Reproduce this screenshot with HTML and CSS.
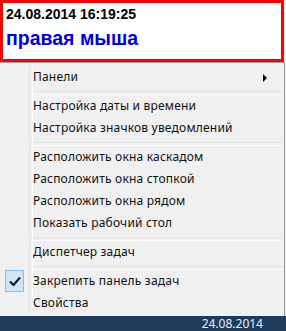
FILE: index.html
```html
<!DOCTYPE html>
<html lang="ru">
<head>
  <meta charset="UTF-8">
  <title>правая мыша</title>
  <link rel="stylesheet" href="styles.css">
</head>
<body>
  <div class="note">
    <div class="note-time">24.08.2014 16:19:25</div>
    <div class="note-title">правая мыша</div>
  </div>

  <div class="menu">
    <div class="item has-sub">Панели<span class="arrow"></span></div>
    <div class="sep"></div>
    <div class="item">Настройка даты и времени</div>
    <div class="item">Настройка значков уведомлений</div>
    <div class="sep"></div>
    <div class="item">Расположить окна каскадом</div>
    <div class="item">Расположить окна стопкой</div>
    <div class="item">Расположить окна рядом</div>
    <div class="item">Показать рабочий стол</div>
    <div class="sep"></div>
    <div class="item">Диспетчер задач</div>
    <div class="sep"></div>
    <div class="item checked">
      <span class="check">
        <svg width="12" height="10" viewBox="0 0 12 10"><path d="M1 5.5 L4.5 9 L11 1.5" fill="none" stroke="#1b1b1b" stroke-width="2.2"/></svg>
      </span>
      Закрепить панель задач
    </div>
    <div class="item">Свойства</div>
  </div>

  <div class="taskbar">
    <span class="clock">24.08.2014</span>
  </div>
</body>
</html>
```

FILE: styles.css
```css
* {
  margin: 0;
  padding: 0;
  box-sizing: border-box;
}

body {
  width: 286px;
  height: 331px;
  overflow: hidden;
  background-color: #f0f0f0;
  display: flex;
  flex-direction: column;
}

/* red note on top */
.note {
  width: 284px;
  height: 62px;
  flex-shrink: 0;
  border: 3px solid #f00;
  background-color: #fff;
  padding: 2px 3px;
  font-family: "Liberation Sans", Arial, sans-serif;
  font-weight: bold;
}

.note-time {
  font-size: 14px;
  line-height: 18px;
  color: #000;
}

.note-title {
  font-size: 19.5px;
  line-height: 30px;
  color: #0000dd;
}

/* context menu */
.menu {
  width: 285px;
  height: 254px;
  flex-shrink: 0;
  background-color: #f0f0f0;
  border-top: 1px solid #a0a0a0;
  border-right: 1px solid #979797;
  padding: 3px 2px 2px 0;
  font-family: "Noto Sans", "Open Sans", sans-serif;
  font-size: 12px;
  letter-spacing: 0.2px;
  color: #111;
  position: relative;
}

.menu::before {
  content: "";
  position: absolute;
  top: 3px;
  bottom: 2px;
  left: 29px;
  width: 2px;
  border-left: 1px solid #e2e3e3;
  border-right: 1px solid #fff;
}

.item {
  height: 22px;
  line-height: 22px;
  padding-left: 33px;
  position: relative;
}

.sep {
  height: 7px;
  margin-left: 31px;
  padding-top: 3px;
}

.sep::after {
  content: "";
  display: block;
  height: 2px;
  border-top: 1px solid #e2e3e3;
  border-bottom: 1px solid #fff;
}

.arrow {
  position: absolute;
  right: 15px;
  top: 8px;
  border-left: 4px solid #000;
  border-top: 4px solid transparent;
  border-bottom: 4px solid transparent;
}

.check {
  position: absolute;
  left: 5px;
  top: 0;
  width: 19px;
  height: 22px;
  background-color: #cde6f7;
  border: 1px solid #86bfea;
  display: flex;
  align-items: center;
  justify-content: center;
}

/* taskbar */
.taskbar {
  flex: 1;
  background-color: #1e3b5c;
  display: flex;
  justify-content: flex-end;
  padding-right: 23px;
}

.clock {
  font-family: "Noto Sans", "Open Sans", sans-serif;
  font-size: 12px;
  line-height: 15px;
  color: #e6edf5;
}
```
